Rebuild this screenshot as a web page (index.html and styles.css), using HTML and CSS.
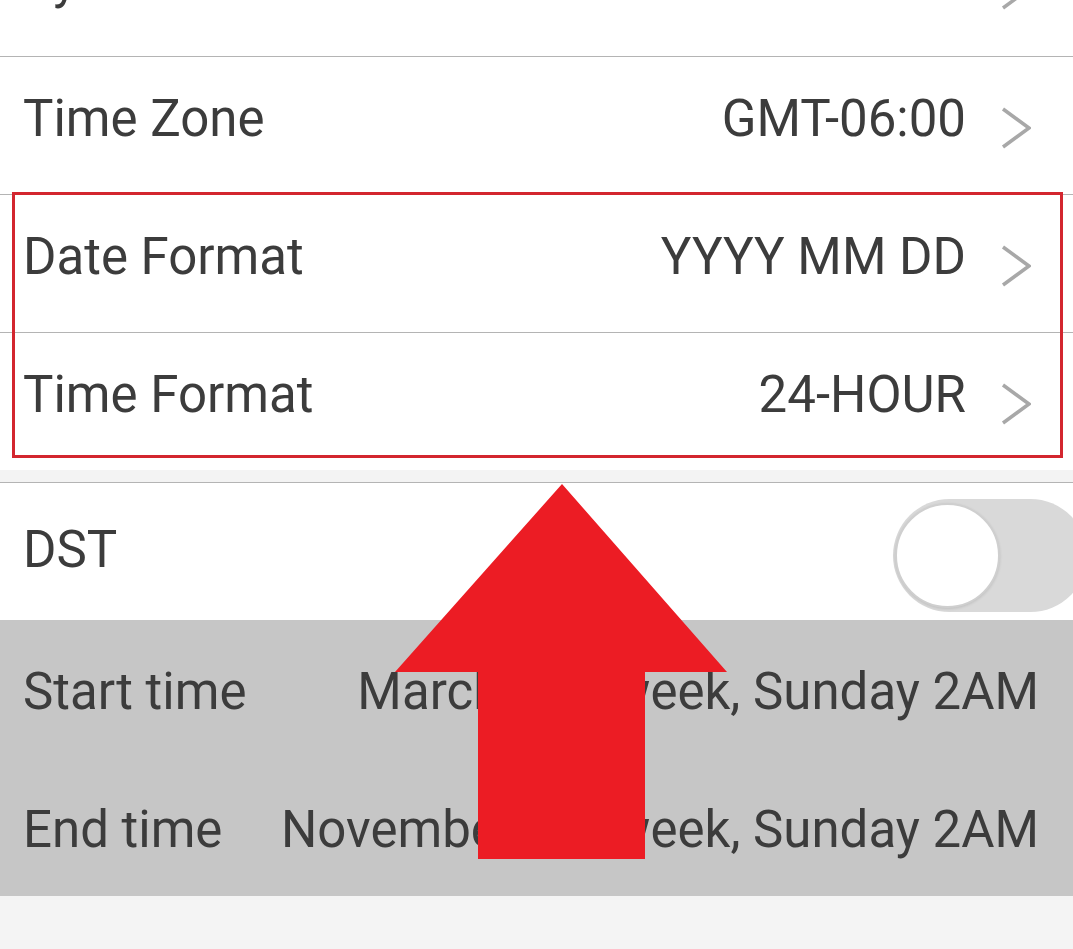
FILE: index.html
```html
<!DOCTYPE html>
<html lang="en">
<head>
<meta charset="utf-8">
<title>Time Settings</title>
<link rel="stylesheet" href="styles.css">
</head>
<body>
<div class="page">
  <div class="list">
    <section class="group">
      <div class="row nav">
        <span class="label">System Time</span>
        <svg class="chev" viewBox="0 0 30 42" width="30" height="42"><polyline points="2,2 28,21 2,40"/></svg>
      </div>
      <div class="row nav">
        <span class="label">Time Zone</span>
        <span class="value">GMT-06:00</span>
        <svg class="chev" viewBox="0 0 30 42" width="30" height="42"><polyline points="2,2 28,21 2,40"/></svg>
      </div>
      <div class="row nav">
        <span class="label">Date Format</span>
        <span class="value">YYYY MM DD</span>
        <svg class="chev" viewBox="0 0 30 42" width="30" height="42"><polyline points="2,2 28,21 2,40"/></svg>
      </div>
      <div class="row nav">
        <span class="label">Time Format</span>
        <span class="value">24-HOUR</span>
        <svg class="chev" viewBox="0 0 30 42" width="30" height="42"><polyline points="2,2 28,21 2,40"/></svg>
      </div>
    </section>
    <div class="spacer"></div>
    <section class="group dst">
      <div class="row">
        <span class="label">DST</span>
        <span class="switch"><span class="knob"></span></span>
      </div>
    </section>
    <section class="times">
      <div class="row time">
        <span class="label">Start time</span>
        <span class="value">March 2nd week, Sunday 2AM</span>
      </div>
      <div class="row time">
        <span class="label">End time</span>
        <span class="value">November 1st week, Sunday 2AM</span>
      </div>
    </section>
  </div>
  <div class="highlight"></div>
  <svg class="arrow" viewBox="0 0 1073 949" width="1073" height="949">
    <polygon points="562,484 727,672 645,672 645,859 478,859 478,672 395,672"/>
  </svg>
</div>
</body>
</html>
```

FILE: styles.css
```css
html, body {
  margin: 0;
  padding: 0;
}
body {
  background: #f4f4f4;
  font-family: Roboto, "Noto Sans", sans-serif;
  color: #3c3c3c;
  overflow-x: hidden;
}
.page {
  position: relative;
  width: 1073px;
  height: 949px;
  overflow: hidden;
}
.list {
  margin-top: -82px;
}
.group {
  background: #ffffff;
}
.row {
  display: flex;
  align-items: center;
  height: 137px;
  padding: 0 42px 0 23px;
  font-size: 51px;
  line-height: 1;
  white-space: nowrap;
}
.group .row + .row {
  border-top: 1px solid #b4b4b4;
}
.row:first-child {
  height: 138px;
}
.label {
  margin-right: auto;
}
.nav .label,
.nav .value {
  margin-bottom: 15px;
}
.chev {
  margin-left: 35px;
  margin-top: 4px;
  flex: none;
}
.chev polyline {
  fill: none;
  stroke: #a8a8a8;
  stroke-width: 3.5;
}
.spacer {
  height: 12px;
  background: #f3f3f3;
}
.dst {
  border-top: 1px solid #b4b4b4;
}
.dst .row {
  height: 137px;
  padding-right: 0;
}
.dst .label {
  margin-bottom: 4px;
}
.switch {
  margin-right: -14px;
  width: 194px;
  height: 113px;
  border-radius: 57px;
  background: #d9d9d9;
  display: flex;
  align-items: center;
  padding-left: 2px;
  box-sizing: border-box;
  margin-top: 8px;
}
.knob {
  width: 105px;
  height: 105px;
  border-radius: 50%;
  background: #ffffff;
  border: 2px solid #cfcfcf;
  box-sizing: border-box;
  box-shadow: 0 1px 3px rgba(0, 0, 0, 0.12);
}
.times {
  background: #c6c6c6;
}
.time {
  height: 138px;
  padding-right: 34px;
}
.time .label,
.time .value {
  margin-top: 4px;
}
.highlight {
  position: absolute;
  left: 12px;
  top: 192px;
  width: 1051px;
  height: 266px;
  border: 3px solid #d3262f;
  box-sizing: border-box;
  pointer-events: none;
}
.arrow {
  position: absolute;
  left: 0;
  top: 0;
  pointer-events: none;
}
.arrow polygon {
  fill: #ec1c24;
}
```
